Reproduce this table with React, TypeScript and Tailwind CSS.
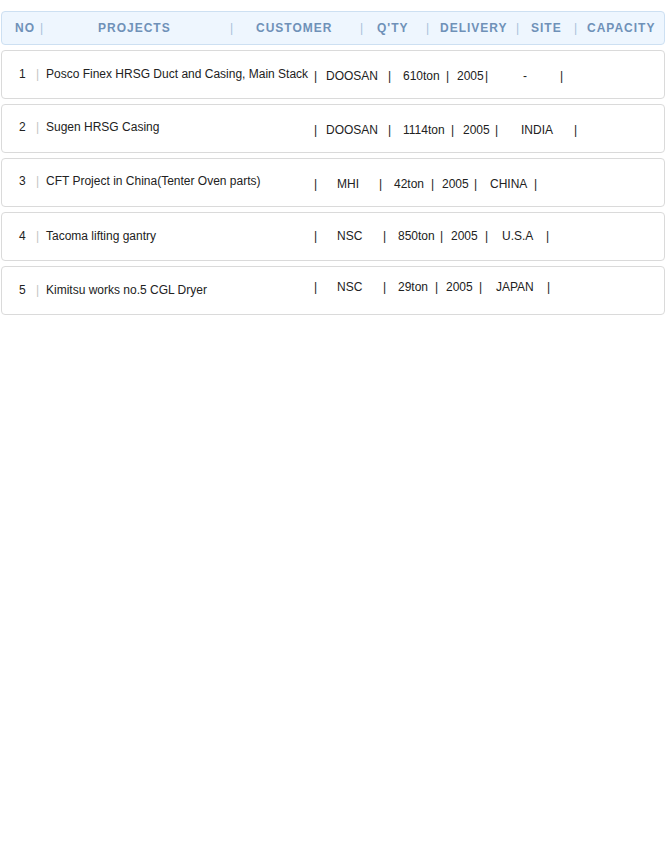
import React from 'react';

type Seg = { t: string; w: string; pipe?: boolean };

interface Row {
  no: number;
  project: string;
  leftPad: string;
  rightPad: string;
  segs: Seg[];
}

// 각 행의 오른쪽 칸 (거래처 | 수량 | 납기 | 현장 |)
const rows: Row[] = [
  {
    no: 1,
    project: 'Posco Finex HRSG Duct and Casing, Main Stack',
    leftPad: 'pt-[16px]',
    rightPad: 'pt-[18px]',
    segs: [
      { t: '|', w: 'w-[12px]', pipe: true },
      { t: 'DOOSAN', w: 'w-[62px]' },
      { t: '|', w: 'w-[15px]', pipe: true },
      { t: '610ton', w: 'w-[43px]' },
      { t: '|', w: 'w-[11px]', pipe: true },
      { t: '2005', w: 'w-[28px]' },
      { t: '|', w: 'w-[38px]', pipe: true },
      { t: '-', w: 'w-[37px]' },
      { t: '|', w: 'w-[10px]', pipe: true },
    ],
  },
  {
    no: 2,
    project: 'Sugen HRSG Casing',
    leftPad: 'pt-[15px]',
    rightPad: 'pt-[18px]',
    segs: [
      { t: '|', w: 'w-[12px]', pipe: true },
      { t: 'DOOSAN', w: 'w-[62px]' },
      { t: '|', w: 'w-[15px]', pipe: true },
      { t: '1114ton', w: 'w-[48px]' },
      { t: '|', w: 'w-[12px]', pipe: true },
      { t: '2005', w: 'w-[32px]' },
      { t: '|', w: 'w-[26px]', pipe: true },
      { t: 'INDIA', w: 'w-[53px]' },
      { t: '|', w: 'w-[10px]', pipe: true },
    ],
  },
  {
    no: 3,
    project: 'CFT Project in China(Tenter Oven parts)',
    leftPad: 'pt-[15px]',
    rightPad: 'pt-[18px]',
    segs: [
      { t: '|', w: 'w-[23px]', pipe: true },
      { t: 'MHI', w: 'w-[42px]' },
      { t: '|', w: 'w-[15px]', pipe: true },
      { t: '42ton', w: 'w-[37px]' },
      { t: '|', w: 'w-[11px]', pipe: true },
      { t: '2005', w: 'w-[32px]' },
      { t: '|', w: 'w-[16px]', pipe: true },
      { t: 'CHINA', w: 'w-[44px]' },
      { t: '|', w: 'w-[10px]', pipe: true },
    ],
  },
  {
    no: 4,
    project: 'Tacoma lifting gantry',
    leftPad: 'pt-[16px]',
    rightPad: 'pt-[16px]',
    segs: [
      { t: '|', w: 'w-[23px]', pipe: true },
      { t: 'NSC', w: 'w-[46px]' },
      { t: '|', w: 'w-[15px]', pipe: true },
      { t: '850ton', w: 'w-[42px]' },
      { t: '|', w: 'w-[11px]', pipe: true },
      { t: '2005', w: 'w-[34px]' },
      { t: '|', w: 'w-[17px]', pipe: true },
      { t: 'U.S.A', w: 'w-[44px]' },
      { t: '|', w: 'w-[10px]', pipe: true },
    ],
  },
  {
    no: 5,
    project: 'Kimitsu works no.5 CGL Dryer',
    leftPad: 'pt-[16px]',
    rightPad: 'pt-[13px]',
    segs: [
      { t: '|', w: 'w-[23px]', pipe: true },
      { t: 'NSC', w: 'w-[46px]' },
      { t: '|', w: 'w-[15px]', pipe: true },
      { t: '29ton', w: 'w-[37px]' },
      { t: '|', w: 'w-[11px]', pipe: true },
      { t: '2005', w: 'w-[33px]' },
      { t: '|', w: 'w-[17px]', pipe: true },
      { t: 'JAPAN', w: 'w-[51px]' },
      { t: '|', w: 'w-[10px]', pipe: true },
    ],
  },
];

const headers: Seg[] = [
  { t: 'NO', w: 'w-[25px]' },
  { t: '|', w: 'w-[58px]', pipe: true },
  { t: 'PROJECTS', w: 'w-[132px]' },
  { t: '|', w: 'w-[26px]', pipe: true },
  { t: 'CUSTOMER', w: 'w-[104px]' },
  { t: '|', w: 'w-[17px]', pipe: true },
  { t: "Q'TY", w: 'w-[49px]' },
  { t: '|', w: 'w-[14px]', pipe: true },
  { t: 'DELIVERY', w: 'w-[76px]' },
  { t: '|', w: 'w-[15px]', pipe: true },
  { t: 'SITE', w: 'w-[43px]' },
  { t: '|', w: 'w-[13px]', pipe: true },
  { t: 'CAPACITY', w: 'w-[76px]' },
];

export default function App() {
  return (
    <div
      className="min-h-[859px] bg-white pt-[11px] pl-px"
      style={{ fontFamily: '"Liberation Sans", Arial, sans-serif' }}
    >
      <div className="w-[664px] flex flex-col gap-[5px]">
        {/* 헤더 */}
        <div className="h-[34px] flex items-center pl-[13px] rounded-[4px] border border-[#cde0f2] bg-[#eef6fe] text-[12px] font-bold tracking-[1px] leading-[14px]">
          {headers.map((h, i) => (
            <span
              key={i}
              className={`${h.w} shrink-0 whitespace-nowrap ${
                h.pipe ? 'text-[#a9c2dc] font-normal tracking-normal' : 'text-[#6f91b8]'
              }`}
            >
              {h.t}
            </span>
          ))}
        </div>

        {rows.map((r) => (
          <div
            key={r.no}
            className="h-[49px] flex items-start pl-[17px] rounded-[4px] border border-[#dadada] bg-white text-[12px] leading-[14px] text-[#222]"
          >
            <div className={`flex ${r.leftPad}`}>
              <span className="w-[17px] shrink-0">{r.no}</span>
              <span className="w-[10px] shrink-0 text-[#c4c4c4]">|</span>
              <span className="w-[268px] shrink-0 whitespace-nowrap">{r.project}</span>
            </div>
            <div className={`flex ${r.rightPad}`}>
              {r.segs.map((s, i) => (
                <span key={i} className={`${s.w} shrink-0 whitespace-nowrap`}>
                  {s.t}
                </span>
              ))}
            </div>
          </div>
        ))}
      </div>
    </div>
  );
}
